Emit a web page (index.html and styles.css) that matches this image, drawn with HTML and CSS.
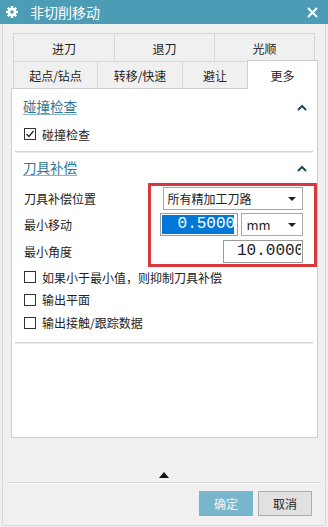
FILE: index.html
```html
<!DOCTYPE html>
<html lang="zh">
  <head>
    <meta charset="UTF-8">
    <title>非切削移动</title>
    <link rel="stylesheet" href="styles.css">
  </head>
  <body>
    <!-- title bar -->
    <div class="titlebar">
      <svg class="gear" viewBox="0 0 12 12" width="12" height="12">
        <g fill="#fff">
          <circle cx="6" cy="6" r="4.2"/>
          <rect x="4.8" y="0" width="2.4" height="12"/>
          <rect x="0" y="4.8" width="12" height="2.4"/>
          <rect x="4.8" y="0" width="2.4" height="12" transform="rotate(45 6 6)"/>
          <rect x="4.8" y="0" width="2.4" height="12" transform="rotate(-45 6 6)"/>
        </g>
        <circle cx="6" cy="6" r="1.8" fill="#4c9cb6"/>
      </svg>
      <span class="title">非切削移动</span>
      <svg class="close" viewBox="0 0 11 11" width="11" height="11">
        <path d="M1 1 L10 10 M10 1 L1 10" stroke="#fff" stroke-width="2"/>
      </svg>
    </div>

    <div class="frame">
      <div class="tabs">
        <div class="tab-row">
          <div class="tab w101">进刀</div>
          <div class="tab w100">退刀</div>
          <div class="tab w101 last">光顺</div>
        </div>
        <div class="tab-row second">
          <div class="tab w84">起点/钻点</div>
          <div class="tab w85">转移/快速</div>
          <div class="tab w65">避让</div>
          <div class="tab w71 last active">更多</div>
        </div>
      </div>

      <div class="panel">
        <div class="sec-head first">
          <span class="sec-title">碰撞检查</span>
          <svg class="chev" viewBox="0 0 10 7" width="10" height="7">
            <polyline points="1,6 5,2 9,6" fill="none" stroke="#1d4b60" stroke-width="2"/>
          </svg>
        </div>
        <label class="check-row">
          <span class="box">
            <svg viewBox="0 0 12 12" width="12" height="12">
              <polyline points="2.5,6 5,8.5 9.5,3" fill="none" stroke="#222" stroke-width="1.2"/>
            </svg>
          </span>
          碰撞检查
        </label>
        <div class="sep"></div>

        <div class="sec-head">
          <span class="sec-title">刀具补偿</span>
          <svg class="chev" viewBox="0 0 10 7" width="10" height="7">
            <polyline points="1,6 5,2 9,6" fill="none" stroke="#1d4b60" stroke-width="2"/>
          </svg>
        </div>

        <div class="fields">
          <div class="labels">
            <div class="field-label">刀具补偿位置</div>
            <div class="field-label gap3">最小移动</div>
            <div class="field-label gap4">最小角度</div>
          </div>
          <div class="controls">
            <div class="select wide">
              <span>所有精加工刀路</span>
              <span class="arrow"></span>
            </div>
            <div class="ctrl-row gap3">
              <div class="num-input short">
                <div class="selected">0.50000</div>
              </div>
              <div class="select unit">
                <span>mm</span>
                <span class="arrow"></span>
              </div>
            </div>
            <div class="ctrl-row end gap4">
              <div class="num-input angle">
                <div class="value">10.00000</div>
              </div>
            </div>
          </div>
        </div>

        <label class="check-row after-fields"><span class="box"></span>如果小于最小值，则抑制刀具补偿</label>
        <label class="check-row tight"><span class="box"></span>输出平面</label>
        <label class="check-row tight"><span class="box"></span>输出接触/跟踪数据</label>
        <div class="sep low"></div>
      </div>

      <div class="more-arrow"></div>
      <div class="footer-sep"></div>
      <div class="buttons">
        <button class="btn ok" type="button">确定</button>
        <button class="btn cancel" type="button">取消</button>
      </div>
    </div>
  </body>
</html>
```

FILE: styles.css
```css
* {
    box-sizing: border-box;
}
body {
    margin: 0;
    width: 328px;
    height: 527px;
    overflow: hidden;
    background: #f0f0f0;
    font-family: "Noto Sans CJK SC", "Noto Sans", sans-serif;
    font-size: 12px;
    color: #222;
}
.titlebar {
    height: 24px;
    background: #4c9cb6;
    color: #fff;
    display: flex;
    align-items: center;
    padding: 0 10px 0 6px;
}
.gear {
    margin-right: 12px;
}
.title {
    flex: 1;
    font-size: 14px;
}
.frame {
    height: 502px;
    margin: 0 2px;
    border: 1px solid #d9d9d9;
    border-top: none;
    padding: 9px 7px 0 8px;
}
.tabs {
    margin-left: 2px;
}
.tab-row {
    display: flex;
    height: 28px;
}
.tab-row.second {
    height: 27px;
}
.tab {
    display: flex;
    align-items: center;
    justify-content: center;
    padding-top: 1px;
    background: #f0f0f0;
    border-top: 1px solid #d6d6d6;
    border-left: 1px solid #d6d6d6;
}
.tab.last {
    border-right: 1px solid #d6d6d6;
}
.tab.active {
    position: relative;
    z-index: 1;
    height: 29px;
    margin-top: -1px;
    background: #fff;
    border-color: #cfcfcf;
}
.w101 { width: 101px; }
.w100 { width: 100px; }
.w84 { width: 84px; }
.w85 { width: 85px; }
.w65 { width: 65px; }
.w71 { width: 71px; }

.panel {
    height: 350px;
    margin-left: 0;
    background: #fff;
    border: 1px solid #cfcfcf;
}
.sec-head {
    height: 22px;
    margin-top: 5px;
    padding: 0 10px 0 11px;
    display: flex;
    align-items: center;
    justify-content: space-between;
}
.sec-head.first {
    margin-top: 7px;
}
.sec-title {
    font-size: 13.5px;
    color: #2d7896;
    line-height: 15px;
    border-bottom: 1px solid #8ab8ca;
}
.check-row {
    display: flex;
    align-items: center;
    height: 22px;
    margin-top: 5px;
    padding-left: 12px;
}
.check-row.after-fields {
    margin-top: -1px;
}
.check-row.tight {
    margin-top: 0;
    height: 23px;
}
.box {
    width: 12px;
    height: 12px;
    margin-right: 6px;
    border: 1px solid #333;
    display: flex;
    align-items: center;
    justify-content: center;
}
.box svg {
    flex: none;
}
.sep {
    margin: 6px 4px 0 3px;
    border-top: 1px solid #d2d2d2;
    box-shadow: 0 1px 0 #ececec;
}
.sep.low {
    margin-top: 8px;
}

.fields {
    display: flex;
    margin-top: 4px;
}
.labels {
    width: 136px;
    padding: 4px 0 0 12px;
}
.field-label {
    height: 23px;
    line-height: 23px;
}
.gap3 {
    margin-top: 3px;
}
.gap4 {
    margin-top: 4px;
}
.controls {
    width: 170px;
    height: 84px;
    border: 3px solid #d8393f;
    padding: 1px 11px 1px 12px;
}
.ctrl-row {
    display: flex;
    height: 23px;
}
.ctrl-row.end {
    justify-content: flex-end;
}
.select {
    height: 23px;
    border: 1px solid #a8a8a8;
    background: #fff;
    display: flex;
    align-items: center;
    justify-content: space-between;
    padding: 0 6px 0 4px;
}
.select.wide {
    width: 140px;
}
.select.unit {
    width: 62px;
    margin-left: 3px;
    padding-left: 5px;
    font-size: 13px;
}
.arrow {
    width: 0;
    height: 0;
    border-left: 4px solid transparent;
    border-right: 4px solid transparent;
    border-top: 4px solid #222;
}
.num-input {
    height: 23px;
    border: 1px solid #9a9a9a;
    background: #fff;
    padding: 1px 3px 1px 1px;
    overflow: hidden;
}
.num-input.short {
    width: 78px;
    margin-left: -3px;
}
.num-input.angle {
    width: 80px;
    padding: 1px 1px 1px 13px;
}
.selected,
.value {
    height: 19px;
    overflow: hidden;
    white-space: nowrap;
    font-family: "Liberation Mono", monospace;
    font-size: 16px;
    line-height: 19px;
}
.selected {
    background: #0078d7;
    color: #fff;
    padding-left: 16px;
}

.more-arrow {
    width: 0;
    height: 0;
    margin: 34px 0 0 148px;
    border-left: 5px solid transparent;
    border-right: 5px solid transparent;
    border-bottom: 6px solid #111;
}
.footer-sep {
    margin: 4px -3px 0 -4px;
    border-top: 1px solid #d8d8d8;
    box-shadow: 0 1px 0 #fafafa;
}
.buttons {
    display: flex;
    justify-content: flex-end;
    gap: 5px;
    margin-top: 8px;
    padding-right: 6px;
}
.btn {
    width: 54px;
    height: 25px;
    font-family: inherit;
    font-size: 12px;
    padding: 0;
}
.btn.ok {
    background: #78b6cd;
    color: #eef7fa;
    border: 1px solid #78b6cd;
}
.btn.cancel {
    background: #e1e1e1;
    color: #1e1e1e;
    border: 1px solid #adadad;
}
```
